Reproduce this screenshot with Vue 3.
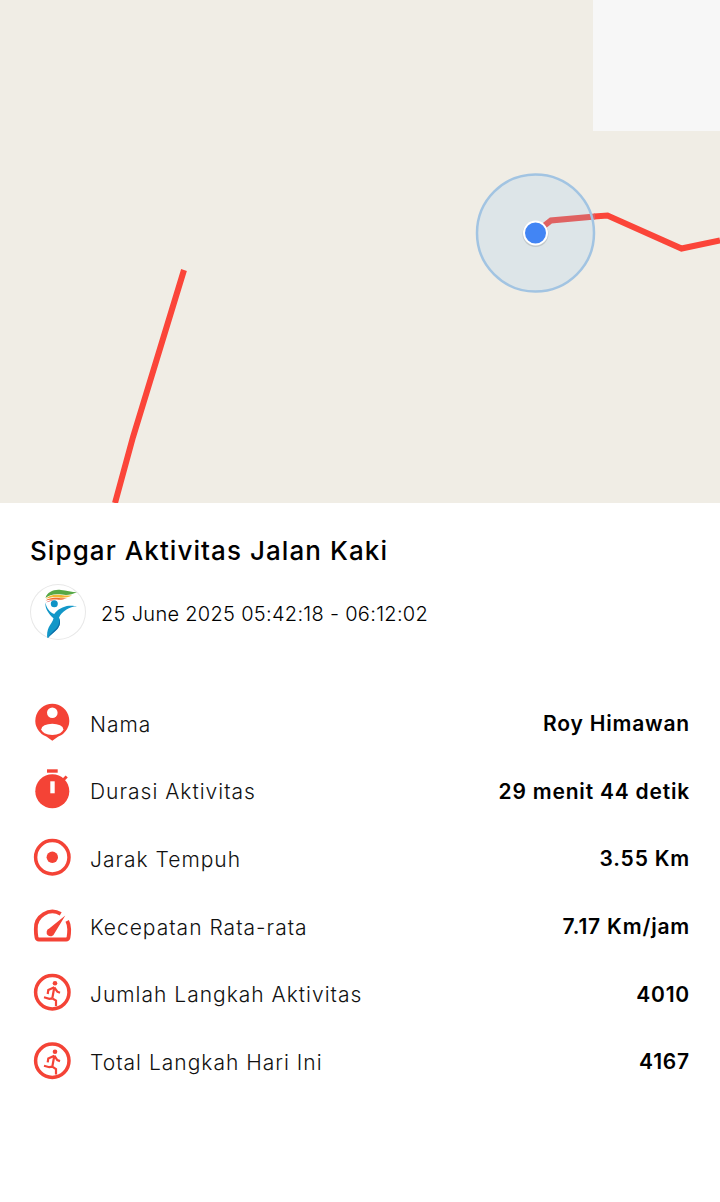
<template>
  <main class="page">
    <section class="map">
      <svg class="map-canvas" viewBox="0 0 720 503" width="720" height="503">
        <rect width="720" height="503" fill="#f0ede5" />
        <rect x="593" width="127" height="131" fill="#f7f7f7" />
        <polyline class="route" points="115,503 133,437 184,270" />
        <polyline class="route" points="594,216.5 607.5,215.5 681.5,248.5 720,240.5" />
        <circle cx="535.5" cy="233" r="58.5" fill="#dde5e8" />
        <!-- the part of the track under the accuracy circle reads paler -->
        <polyline class="route route-faded" points="535,233 551,220.5 595,216.5" />
        <circle cx="535.5" cy="233" r="58.5" fill="none" stroke="#a2c4e2" stroke-width="2.5" />
        <circle cx="535.5" cy="234" r="13" fill="#000" fill-opacity="0.12" />
        <circle cx="535.5" cy="233" r="11.5" fill="#4285f4" stroke="#fff" stroke-width="2" />
      </svg>
    </section>

    <section class="sheet">
      <h1 class="title">Sipgar Aktivitas Jalan Kaki</h1>
      <div class="when">
        <div class="logo">
          <svg viewBox="0 0 56 56" width="56" height="56">
            <path d="M15.5 14C17 8 24 5 31 6c5 .7 11 2 16 2.300-5 2.200-10 3.200-15 2.200-7-1-13 0-16.500 3.500z" fill="#57a845" />
            <path d="M15.500 15c3.500-4 9.500-5 15.500-4 3 .5 7 .8 11 .5-4 2-9 2.500-13 2-6-.5-10 0-13.500 1.500z" fill="#f2b632" />
            <path d="M15.500 16.500c3.500-2.700 8.500-3.200 13.500-2.500 2 .3 5 .3 8 0-4 1.800-7 2-10 1.600-4-.4-8-.1-11.500.9z" fill="#ee6a2c" />
            <path d="M16 18.500c2.500-2 6-2.500 10-2.200-4 .3-7 1-10 2.200z" fill="#e23d3d" />
            <circle cx="24.300" cy="19.700" r="3.500" fill="#0f93c6" />
            <path d="M15.500 18.500c.8 5.500 4 9.500 8.700 11.500 3-4.500 9-7.800 14.800-8.300 3-.2 6 .1 8 .5-4 .3-7.500 1.300-10.500 3.300-4 2.500-6.500 5.300-7.500 8.200 2 4 1 8-2 11.500-3 3-7 5.500-9.700 9.500-.6-4.500 0-8.500 1.500-11.500 1.500-3 4.300-6 4.700-9-4.500-4-9-9.500-8-16.200z" fill="#1297c8" />
            <path d="M17.300 55c2-4.500 5-7 8-9.800 3-2.700 4.500-6.200 3.700-11.200 2 4 1 8-2 11.500-3 3-7 5.500-9.700 9.500z" fill="#0d6fa8" />
          </svg>
        </div>
        <span class="when-text">25 June 2025 05:42:18 - 06:12:02</span>
      </div>

      <ul class="stats">
        <li class="stat">
          <svg class="stat-icon" viewBox="0 0 44 44">
            <path d="M21.300 1.700a17 17 0 0 1 6 32.900l-6 4.100-6-4.100a17 17 0 0 1 6-32.900z" fill="#f44336" />
            <circle cx="21.300" cy="10.700" r="5.300" fill="#fff" />
            <ellipse cx="21.300" cy="27.300" rx="11" ry="5.600" fill="#fff" />
          </svg>
          <span class="stat-label">Nama</span>
          <strong class="stat-value">Roy Himawan</strong>
        </li>
        <li class="stat">
          <svg class="stat-icon" viewBox="0 0 44 44">
            <rect x="16" y="0.300" width="10.700" height="3.400" fill="#f44336" />
            <circle cx="21.300" cy="22.300" r="17" fill="#f44336" />
            <path d="M35.700 7.500l-4 4" stroke="#f44336" stroke-width="3" fill="none" />
            <rect x="19.300" y="12.300" width="4.400" height="12" fill="#fff" />
          </svg>
          <span class="stat-label">Durasi Aktivitas</span>
          <strong class="stat-value">29 menit 44 detik</strong>
        </li>
        <li class="stat">
          <svg class="stat-icon" viewBox="0 0 44 44">
            <circle cx="21.300" cy="20.300" r="16.700" fill="none" stroke="#f44336" stroke-width="3.500" />
            <circle cx="21.300" cy="20.300" r="5.700" fill="#f44336" />
          </svg>
          <span class="stat-label">Jarak Tempuh</span>
          <strong class="stat-value">3.55 Km</strong>
        </li>
        <li class="stat">
          <svg class="stat-icon" viewBox="0 0 44 44">
            <path d="M29.700 8.800A16.700 16.700 0 0 0 4.800 24.200c0 3 .2 5.500.7 8.300.3 1.300 1 2 2.300 2h27.400c1.300 0 2-.7 2.300-2 .5-2.800.7-5.300.7-8.300 0-3-.7-5.800-2-8.300" fill="none" stroke="#f44336" stroke-width="3.800" stroke-linejoin="round" />
            <path d="M34.300 10.400L23.400 28.500a4 4 0 1 1-5.200-5z" fill="#f44336" />
          </svg>
          <span class="stat-label">Kecepatan Rata-rata</span>
          <strong class="stat-value">7.17 Km/jam</strong>
        </li>
        <li class="stat">
          <svg class="stat-icon" viewBox="0 0 44 44">
            <circle cx="21.300" cy="20.300" r="16.700" fill="none" stroke="#f44336" stroke-width="3.500" />
            <circle cx="24" cy="11.300" r="2.300" fill="#f44336" />
            <path :d="runner" class="runner" />
          </svg>
          <span class="stat-label">Jumlah Langkah Aktivitas</span>
          <strong class="stat-value">4010</strong>
        </li>
        <li class="stat">
          <svg class="stat-icon" viewBox="0 0 44 44">
            <circle cx="21.300" cy="20.700" r="16.700" fill="none" stroke="#f44336" stroke-width="3.500" />
            <circle cx="24" cy="11.700" r="2.300" fill="#f44336" />
            <path :d="runner" class="runner runner-low" />
          </svg>
          <span class="stat-label">Total Langkah Hari Ini</span>
          <strong class="stat-value">4167</strong>
        </li>
      </ul>
    </section>
  </main>
</template>

<script setup>
// torso, both arms and both legs of the walking figure
const runner = 'M23.300 15.300L21.300 26.300M23.300 15.300L17.300 18L16.700 22M23.300 15.300L26.300 19.700L29 20.700M21.300 26.300L18.300 26.800L13 25.300M21.300 26.300L25 28.700L25 34'
</script>

<style>
html, body {
  background: #fff;
}
</style>

<style scoped>
.page {
  width: 720px;
  min-height: 1202px;
  background: #fff;
  font-family: Inter, "Liberation Sans", sans-serif;
  color: #000;
}

.map {
  height: 503px;
}

.map-canvas {
  display: block;
}

.route {
  fill: none;
  stroke: #fb4539;
  stroke-width: 6;
  stroke-linejoin: miter;
}

.route-faded {
  stroke: #df6262;
}

.runner {
  fill: none;
  stroke: #f44336;
  stroke-width: 2.2;
}

.runner-low {
  transform: translateY(0.4px);
}

.sheet {
  padding: 30px 30px 0;
}

.title {
  margin: 0;
  font-size: 26px;
  line-height: 36px;
  font-weight: 550;
  letter-spacing: 1.07px;
}

.when {
  display: flex;
  align-items: center;
  gap: 15px;
  margin-top: 15px;
}

.logo {
  width: 56px;
  height: 56px;
  border-radius: 50%;
  box-shadow: inset 0 0 0 1px #e8e8e8;
  overflow: hidden;
}

.logo svg {
  display: block;
}

.when-text {
  margin-top: 3px;
  font-size: 20px;
  font-weight: 300;
  letter-spacing: 0.3px;
}

.stats {
  list-style: none;
  margin: 50px 0 0;
  padding: 0;
}

.stat {
  display: flex;
  align-items: center;
  height: 67.6px;
}

.stat-icon {
  width: 44px;
  height: 44px;
  margin-left: 1px;
  margin-right: 15px;
  flex: none;
}

.stat-label {
  margin-top: 1px;
  font-size: 21px;
  font-weight: 300;
  letter-spacing: 1px;
  color: #111;
}

.stat-value {
  margin-left: auto;
  font-size: 21px;
  font-weight: 600;
  letter-spacing: 0.8px;
}
</style>
